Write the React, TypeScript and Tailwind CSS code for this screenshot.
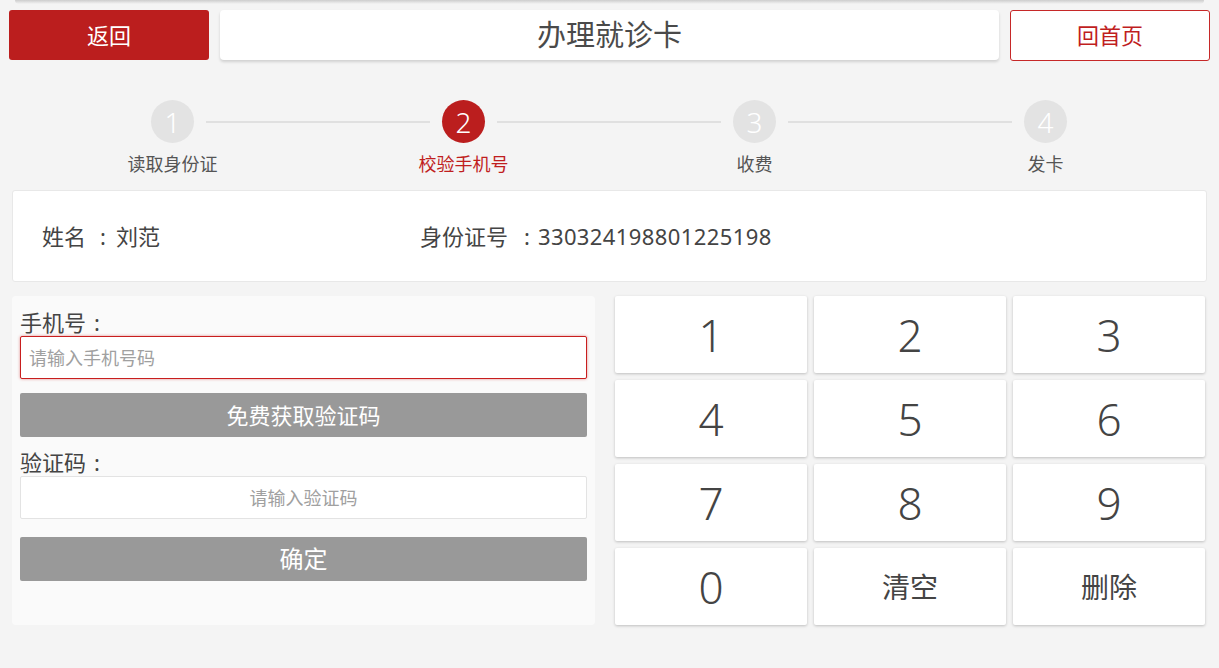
import React from "react";

const steps = [
  { n: "1", label: "读取身份证", active: false },
  { n: "2", label: "校验手机号", active: true },
  { n: "3", label: "收费", active: false },
  { n: "4", label: "发卡", active: false },
];

const keys = ["1", "2", "3", "4", "5", "6", "7", "8", "9", "0", "清空", "删除"];

export default function App() {
  return (
    <div className="min-h-[668px] w-[1219px] bg-[#f4f4f4] font-['Noto_Sans','Noto_Sans_CJK_SC',sans-serif] text-[#444]">
      <div className="mx-[15px] h-[4px] rounded-b-[4px] bg-linear-to-b from-[#cdcdcd] to-[#f4f4f4]" />

      {/* header */}
      <div className="mt-[6px] flex h-[50px] gap-[11px] px-[9px]">
        <button className="flex h-[50px] w-[200px] items-center justify-center rounded-[3px] bg-[#bb1e1e] text-[22px] text-white">
          返回
        </button>
        <div className="flex h-[50px] flex-1 items-center justify-center rounded-[4px] bg-white text-[29px] text-[#4a4a4a] shadow-[0_2px_3px_rgba(0,0,0,0.15)]">
          办理就诊卡
        </div>
        <button className="flex h-[51px] w-[200px] items-center justify-center rounded-[3px] border border-[#c62828] bg-white text-[22px] text-[#c01e1e]">
          回首页
        </button>
      </div>

      {/* steps */}
      <div className="mt-[40px] flex items-center pl-[151px]">
        {steps.map((s, i) => (
          <React.Fragment key={s.n}>
            <div
              className={
                "flex h-[43px] w-[43px] items-center justify-center rounded-full text-[28px] font-light leading-none text-white " +
                (s.active ? "bg-[#bb1e1e]" : "bg-[#e3e3e3]")
              }
            >
              {s.n}
            </div>
            {i < steps.length - 1 && <div className="mx-[12px] h-[2px] w-[224px] bg-[#e0e0e0]" />}
          </React.Fragment>
        ))}
      </div>
      <div className="mt-[10px] flex pl-[27px]">
        {steps.map((s) => (
          <div
            key={s.n}
            className={"w-[291px] text-center text-[18px] leading-[22px] " + (s.active ? "text-[#c01e1e]" : "text-[#555]")}
          >
            {s.label}
          </div>
        ))}
      </div>

      {/* info card */}
      <div className="mx-[12px] mt-[15px] flex h-[92px] items-center rounded-[3px] border border-[#e8e8e8] bg-white pl-[29px] text-[22px] text-[#444]">
        <div className="w-[378px]">
          姓名<span className="ml-[14px] mr-[10px]">:</span>刘范
        </div>
        <div>
          身份证号<span className="ml-[16px] mr-[8px]">:</span>
          <span className="tracking-[0.4px]">330324198801225198</span>
        </div>
      </div>

      {/* bottom */}
      <div className="mt-[14px] flex gap-[20px] px-[12px]">
        <div className="h-[329px] w-[583px] rounded-[4px] bg-[#fafafa] px-[8px] pt-[14px]">
          <div className="h-[24px] text-[22px] leading-[24px] text-[#444]">
            手机号<span className="ml-[8px]">:</span>
          </div>
          <input
            className="mt-[2px] h-[43px] w-full rounded-[2px] border border-[#c81e1e] bg-white pl-[8px] text-[18px] shadow-[0_0_3px_rgba(200,0,0,0.45)] outline-none placeholder:text-[#a0a0a0]"
            placeholder="请输入手机号码"
          />
          <button className="mt-[14px] flex h-[44px] w-full items-center justify-center rounded-[2px] bg-[#999999] text-[22px] text-white">
            免费获取验证码
          </button>
          <div className="mt-[13px] h-[24px] text-[22px] leading-[24px] text-[#444]">
            验证码<span className="ml-[8px]">:</span>
          </div>
          <input
            className="mt-[2px] h-[43px] w-full rounded-[2px] border border-[#e3e3e3] bg-white text-center text-[18px] outline-none placeholder:text-[#a0a0a0]"
            placeholder="请输入验证码"
          />
          <button className="mt-[18px] flex h-[44px] w-full items-center justify-center rounded-[2px] bg-[#999999] text-[24px] text-white">
            确定
          </button>
        </div>

        <div className="grid grid-cols-[repeat(3,192px)] grid-rows-[repeat(4,77px)] gap-[7px]">
          {keys.map((k) => (
            <button
              key={k}
              className={
                "flex items-center justify-center rounded-[2px] bg-white text-[#444] shadow-[0_1px_3px_rgba(0,0,0,0.22)] " +
                (k.length > 1 ? "text-[28px]" : "text-[44px] font-light")
              }
            >
              {k}
            </button>
          ))}
        </div>
      </div>
    </div>
  );
}
